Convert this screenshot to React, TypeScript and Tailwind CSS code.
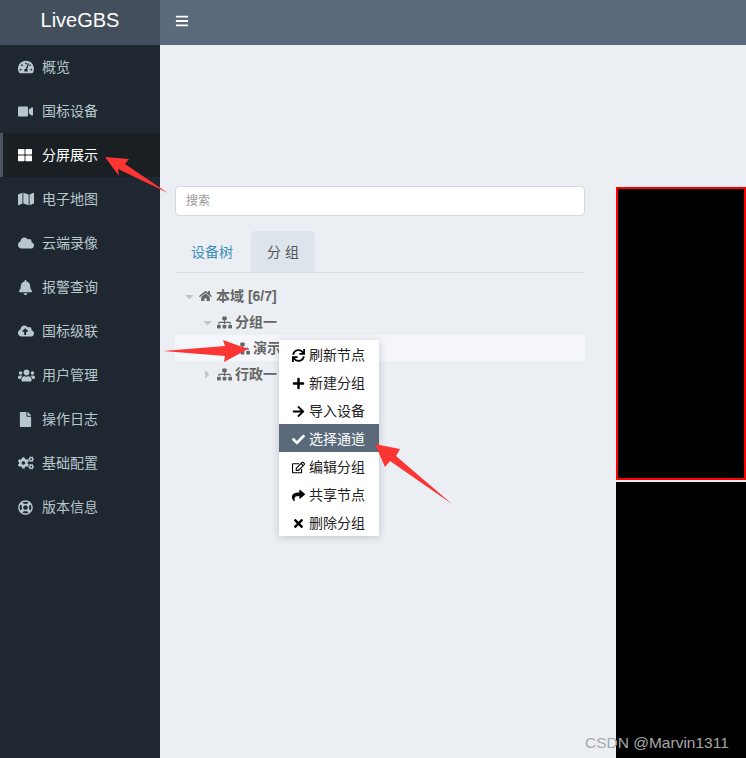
import React from "react";
import {
  FaArrowRight, FaBars, FaBell, FaCaretDown, FaCaretRight, FaCheck, FaCloud, FaCloudUploadAlt, FaCogs,
  FaFile, FaHome, FaMap, FaPlus, FaRegEdit, FaRegLifeRing, FaShare, FaSitemap, FaSync, FaTachometerAlt, FaThLarge,
  FaTimes, FaUsers, FaVideo,
} from "react-icons/fa";

const font = { fontFamily: '"Liberation Sans", "Noto Sans CJK SC", sans-serif' };

const navItems = [
  { label: "概览", icon: FaTachometerAlt, size: 16 },
  { label: "国标设备", icon: FaVideo, size: 15 },
  { label: "分屏展示", icon: FaThLarge, size: 14, active: true },
  { label: "电子地图", icon: FaMap, size: 16 },
  { label: "云端录像", icon: FaCloud, size: 16 },
  { label: "报警查询", icon: FaBell, size: 15 },
  { label: "国标级联", icon: FaCloudUploadAlt, size: 16 },
  { label: "用户管理", icon: FaUsers, size: 17 },
  { label: "操作日志", icon: FaFile, size: 15 },
  { label: "基础配置", icon: FaCogs, size: 16 },
  { label: "版本信息", icon: FaRegLifeRing, size: 15 },
];

const menuItems = [
  { label: "刷新节点", icon: FaSync },
  { label: "新建分组", icon: FaPlus },
  { label: "导入设备", icon: FaArrowRight },
  { label: "选择通道", icon: FaCheck, active: true },
  { label: "编辑分组", icon: FaRegEdit },
  { label: "共享节点", icon: FaShare },
  { label: "删除分组", icon: FaTimes },
];

const App = () => {
  return (
    <div className="relative flex h-[758px] w-[746px] overflow-hidden bg-[#ebeff4]" style={font}>
      {/* Sidebar */}
      <aside className="flex w-[160px] shrink-0 flex-col bg-[#1f2730]">
        <div className="flex h-[45px] items-center justify-center bg-[#434f5c] pb-[6px] text-[20px] text-white">
          LiveGBS
        </div>
        {navItems.map((item) => (
          <div
            key={item.label}
            className={`flex h-[44px] items-center border-l-[3px] pl-[15px] text-sm ${
              item.active ? "border-[#4b5662] bg-[#1a1f24] text-white" : "border-transparent text-[#b8c7ce]"
            }`}
          >
            <span className="flex w-[24px] shrink-0">
              <item.icon size={item.size} />
            </span>
            {item.label}
          </div>
        ))}
      </aside>

      <div className="flex min-w-0 flex-1 flex-col">
        {/* Top bar */}
        <header className="flex h-[45px] shrink-0 items-center bg-[#5a6a7b] pb-[4px] pl-[15px] text-white">
          <FaBars className="text-[14px]" />
        </header>

        {/* Content */}
        <main className="flex flex-1 gap-[31px] overflow-hidden pl-[15px] pt-[141px]">
          <section className="w-[410px] shrink-0">
            <div className="flex h-[30px] items-center rounded border border-[#d2d6de] bg-white px-[10px] text-xs text-[#999]">
              搜索
            </div>

            <div className="mt-[15px] flex h-[42px] gap-[2px] border-b border-[#ddd] text-sm">
              <div className="flex items-center px-4 text-[#3c8dbc]">设备树</div>
              <div className="flex items-center whitespace-pre rounded-t bg-[#dde4ec] px-4 text-[#555]">分 组</div>
            </div>

            <div className="mt-[10px] text-sm font-bold text-[#666]">
              <div className="flex h-[26px] items-center pl-[5px]">
                <FaCaretDown className="w-[19px] text-[13px] text-[#c0c4cc]" />
                <FaHome className="mr-[4px] w-[13px] text-[14px] text-[#666]" />
                本域 [6/7]
              </div>
              <div className="flex h-[26px] items-center pl-[23px]">
                <FaCaretDown className="w-[19px] text-[13px] text-[#c0c4cc]" />
                <FaSitemap className="mr-[3px] w-[15px] text-[15px]" />
                分组一
              </div>
              <div className="flex h-[26px] items-center bg-[#f4f6fb] pl-[60px]">
                <FaSitemap className="mr-[3px] w-[15px] text-[15px]" />
                演示
              </div>
              <div className="flex h-[26px] items-center pl-[23px]">
                <FaCaretRight className="w-[19px] text-[13px] text-[#c0c4cc]" />
                <FaSitemap className="mr-[3px] w-[15px] text-[15px]" />
                行政一
              </div>
            </div>
          </section>

          {/* Video panels */}
          <section className="min-w-0 flex-1 pt-[1px]">
            <div className="h-[293px] border-2 border-[#ff0000] bg-black" />
            <div className="mt-[2px] h-[400px] bg-black" />
          </section>
        </main>
      </div>

      {/* Context menu */}
      <div className="absolute left-[279px] top-[340px] w-[100px] bg-white text-sm text-[#222] shadow-[0_1px_8px_rgba(0,0,0,0.18)]">
        {menuItems.map((item) => (
          <div
            key={item.label}
            className={`flex h-[28px] items-center pl-[13px] pt-[2px] ${item.active ? "bg-[#5a6a7b] text-white" : ""}`}
          >
            <item.icon className={`mr-[4px] w-[13px] shrink-0 text-[13px] ${item.active ? "text-white" : "text-black"}`} />
            {item.label}
          </div>
        ))}
      </div>

      {/* Annotation arrows */}
      <svg className="pointer-events-none absolute left-0 top-0" width="746" height="758" fill="#fb3434">
        <polygon points="105,157 129,159 125,164 168,193 118,169 119,176" />
        <polygon points="248,349 223,340 225,346 163,351 225,356 224,362" />
        <polygon points="375,444 400,449 396,456 452,504 390,461 385,467" />
      </svg>

      <div className="absolute left-[585px] top-[731px] text-[15.5px] text-[#a8a8a8]">CSDN @Marvin1311</div>
    </div>
  );
};

export default App;
